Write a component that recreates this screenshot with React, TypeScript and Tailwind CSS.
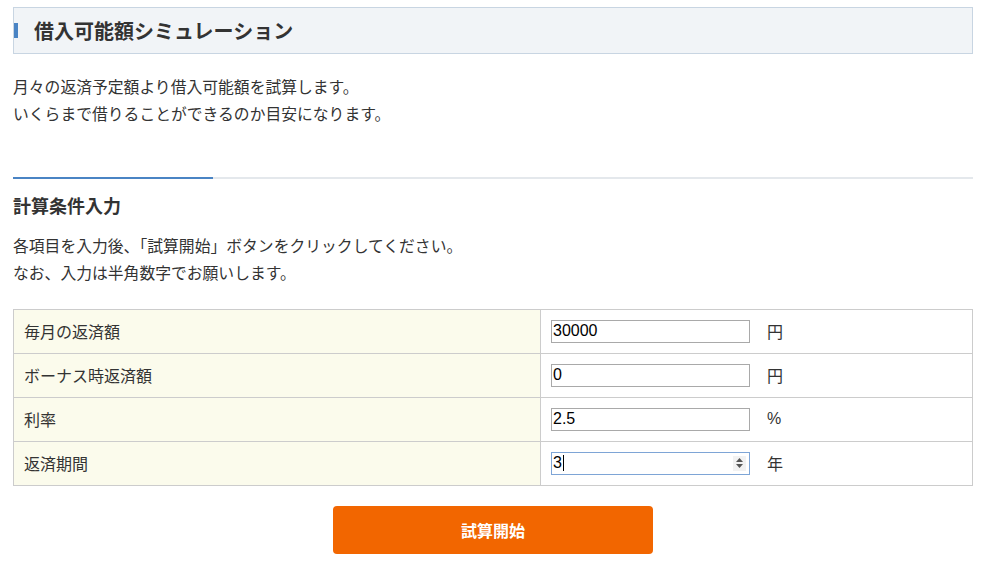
import { useState } from 'react';

const jp = { fontFamily: '"Noto Sans CJK JP", "Noto Sans", sans-serif' };
const latin = { fontFamily: '"Liberation Sans", Arial, sans-serif' };

interface Row {
  label: string;
  value: string;
  unit: string;
  spinner?: boolean;
}

const rows: Row[] = [
  { label: '毎月の返済額', value: '30000', unit: '円' },
  { label: 'ボーナス時返済額', value: '0', unit: '円' },
  { label: '利率', value: '2.5', unit: '%' },
  { label: '返済期間', value: '3', unit: '年', spinner: true },
];

function Field({ row }: { row: Row }) {
  const [value, setValue] = useState(row.value);

  if (row.spinner) {
    return (
      <div className="relative flex h-[23px] w-[199px] items-center border border-[#7ea5d6] bg-white pl-[1px] text-[16px] text-black" style={latin}>
        <span>{value}</span>
        <span className="ml-[1px] h-[16px] w-px bg-black" />
        <div className="absolute right-[3px] top-[3px] flex h-[15px] w-[13px] flex-col items-center justify-center gap-[2px] bg-[#f2f2f2]">
          <svg width="7" height="4" viewBox="0 0 7 4">
            <path d="M0 4 L3.5 0 L7 4 Z" fill="#555" />
          </svg>
          <svg width="7" height="4" viewBox="0 0 7 4">
            <path d="M0 0 L3.5 4 L7 0 Z" fill="#555" />
          </svg>
        </div>
      </div>
    );
  }

  return (
    <input
      value={value}
      onChange={(e) => setValue(e.target.value)}
      className="h-[23px] w-[199px] border border-[#a9a9a9] bg-white px-[1px] text-[16px] text-black outline-none"
      style={latin}
    />
  );
}

export default function App() {
  return (
    <div className="min-h-[561px] bg-white pl-[13px] pr-[11px] pt-[7px] text-[#333]" style={jp}>
      <div className="flex h-[47px] items-center border border-[#c8d5e2] bg-[#f1f4f7]">
        <div className="h-[15px] w-[4px] bg-[#4a84c4]" />
        <h1 className="ml-[16px] text-[20px] font-bold leading-none text-[#333]">借入可能額シミュレーション</h1>
      </div>

      <div className="mt-[19px] text-[15.8px] leading-[27px]">
        <p>月々の返済予定額より借入可能額を試算します。</p>
        <p>いくらまで借りることができるのか目安になります。</p>
      </div>

      <div className="mt-[50px] flex">
        <div className="h-[2px] w-[200px] bg-[#4a84c4]" />
        <div className="h-[2px] flex-1 bg-[#e4e8ec]" />
      </div>

      <h2 className="mt-[13px] text-[18px] font-bold leading-[27px]">計算条件入力</h2>

      <div className="mt-[13px] text-[15.8px] leading-[27px]">
        <p>各項目を入力後、「試算開始」ボタンをクリックしてください。</p>
        <p>なお、入力は半角数字でお願いします。</p>
      </div>

      <div className="mt-[23px] border-t border-l border-[#cccccc]">
        {rows.map((row) => (
          <div key={row.label} className="grid h-[44px] grid-cols-[527px_1fr] border-b border-[#cccccc]">
            <div className="flex items-center border-r border-[#cccccc] bg-[#fbfbec] pb-[2px] pl-[10px] text-[16px]">{row.label}</div>
            <div className="flex items-center border-r border-[#cccccc] pb-[1px] pl-[10px]">
              <Field row={row} />
              <span className="ml-[17px] text-[16px]" style={row.unit === '%' ? latin : jp}>
                {row.unit}
              </span>
            </div>
          </div>
        ))}
      </div>

      <div className="mt-[20px] flex justify-center">
        <button className="h-[48px] w-[320px] rounded-[4px] bg-[#f26600] text-[16px] font-bold text-white">試算開始</button>
      </div>
    </div>
  );
}
